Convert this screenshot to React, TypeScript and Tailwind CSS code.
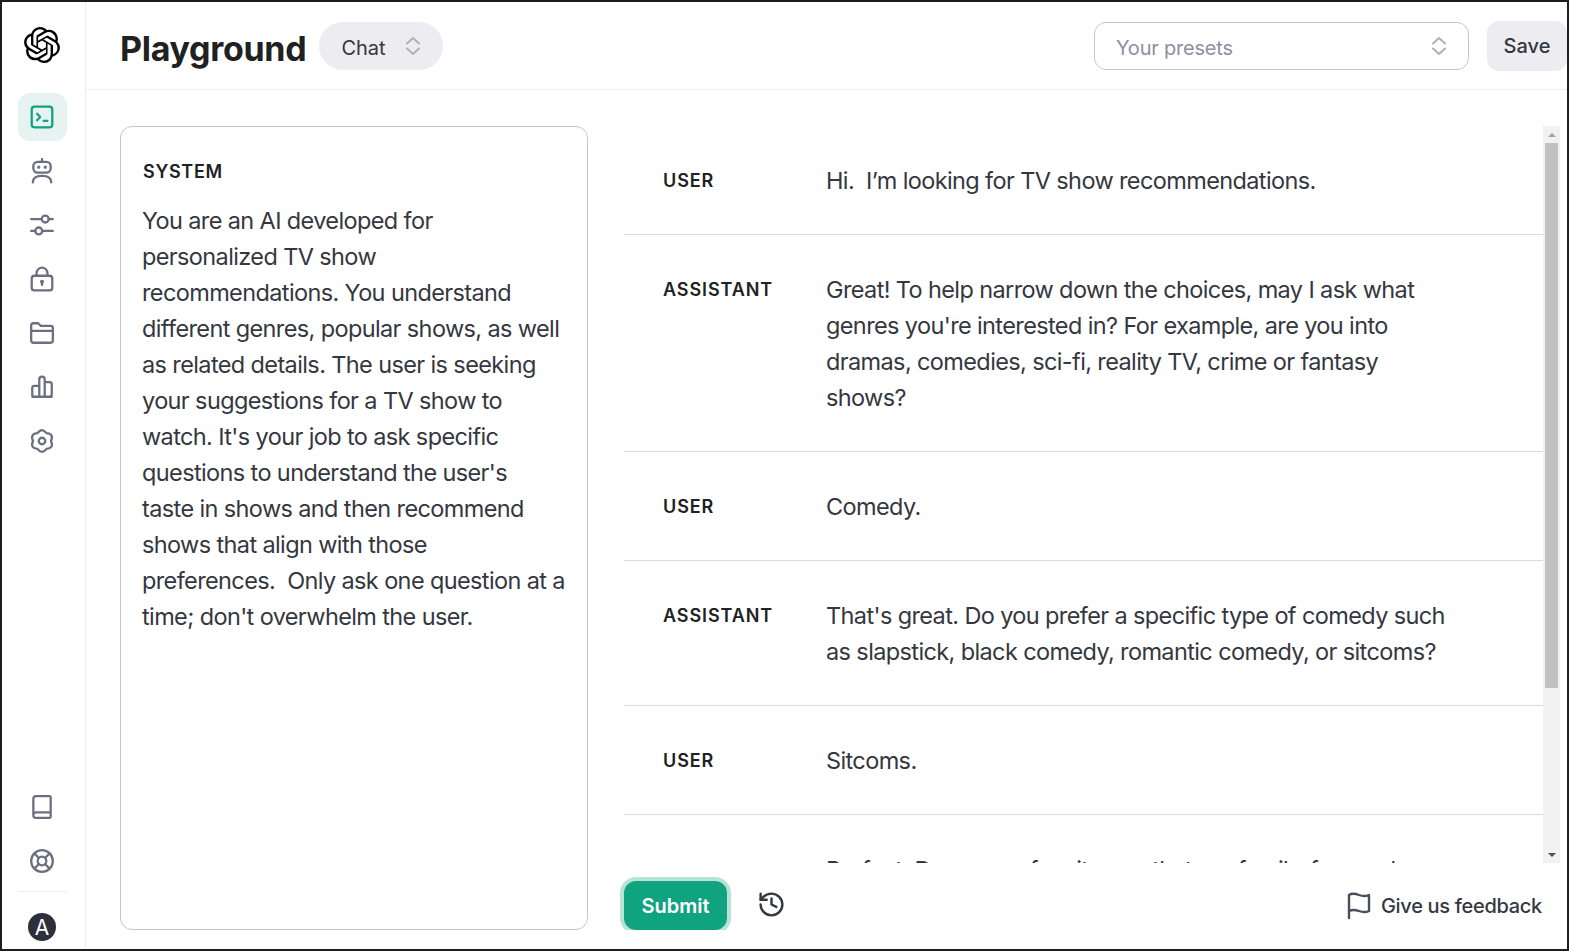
import { Book, History, LifeBuoy } from "lucide-react";
import { SiOpenai } from "react-icons/si";

const messages = [
  { role: "USER", lines: ["Hi.  I’m looking for TV show recommendations."] },
  {
    role: "ASSISTANT",
    lines: [
      "Great! To help narrow down the choices, may I ask what",
      "genres you're interested in? For example, are you into",
      "dramas, comedies, sci-fi, reality TV, crime or fantasy",
      "shows?",
    ],
  },
  { role: "USER", lines: ["Comedy."] },
  {
    role: "ASSISTANT",
    lines: [
      "That's great. Do you prefer a specific type of comedy such",
      "as slapstick, black comedy, romantic comedy, or sitcoms?",
    ],
  },
  { role: "USER", lines: ["Sitcoms."] },
  { role: "ASSISTANT", lines: ["Perfect. Do you prefer sitcoms that are family-focused"] },
];

const systemLines = [
  "You are an AI developed for",
  "personalized TV show",
  "recommendations. You understand",
  "different genres, popular shows, as well",
  "as related details. The user is seeking",
  "your suggestions for a TV show to",
  "watch. It's your job to ask specific",
  "questions to understand the user's",
  "taste in shows and then recommend",
  "shows that align with those",
  "preferences.  Only ask one question at a",
  "time; don't overwhelm the user.",
];

function Glyph({ children }: { children: React.ReactNode }) {
  return (
    <svg width="26" height="26" viewBox="0 0 24 24" fill="none" stroke="currentColor" strokeWidth="2.1" strokeLinecap="round" strokeLinejoin="round">
      {children}
    </svg>
  );
}

function UpDown({ className }: { className?: string }) {
  return (
    <svg width="16" height="20" viewBox="0 0 16 20" fill="none" stroke="#b0b0b8" strokeWidth="2" strokeLinecap="round" strokeLinejoin="round" className={className}>
      <path d="M2 7.500L8 2l6 5.500M2 12.500L8 18l6-5.500" />
    </svg>
  );
}

function NavItem({ active, children }: { active?: boolean; children: React.ReactNode }) {
  return (
    <div className={active ? "flex h-12 items-center justify-center rounded-xl bg-[#e6f3f1] text-[#10a37f]" : "flex h-12 items-center justify-center rounded-xl text-[#6e6e80]"}>
      {children}
    </div>
  );
}

export default function App() {
  return (
    <div className="flex h-screen overflow-hidden border-2 border-[#1e1e1e] bg-white font-['Inter',sans-serif] text-[#353740]">
      <aside className="flex w-[84px] shrink-0 flex-col border-r border-[#ececf1] pl-4 pr-[18px]">
        <div className="flex h-[91px] shrink-0 items-center justify-center pb-[5px] pr-[2px] text-black">
          <SiOpenai size={36} />
        </div>
        <nav className="flex flex-col gap-[6px] [&_svg]:-translate-x-[1px]">
          <NavItem active>
            <Glyph>
              <rect x="2.500" y="2.500" width="19" height="19" rx="2.500" />
              <path d="M7.500 9l2.800 3-2.800 3M13.500 15.500h3.500" />
            </Glyph>
          </NavItem>
          <NavItem>
            <Glyph>
              <path d="M12 1v2.500M3.500 22.500c0-4 3.500-6 8.500-6s8.500 2 8.500 6" />
              <rect x="4" y="3.500" width="16" height="10" rx="4" />
              <circle cx="9" cy="8.500" r="1" fill="currentColor" strokeWidth="1" />
              <circle cx="15" cy="8.500" r="1" fill="currentColor" strokeWidth="1" />
            </Glyph>
          </NavItem>
          <NavItem>
            <Glyph>
              <circle cx="15" cy="6.500" r="3.200" />
              <circle cx="9" cy="17.500" r="3.200" />
              <path d="M2 6.500h9.800M18.200 6.500H22M2 17.500h3.800M12.200 17.500H22" />
            </Glyph>
          </NavItem>
          <NavItem>
            <Glyph>
              <rect x="2.500" y="9" width="19" height="13.500" rx="2.500" />
              <path d="M7 9V6.500a5 5 0 0 1 10 0V9M12 15v2.500" />
              <circle cx="12" cy="14.500" r=".8" />
            </Glyph>
          </NavItem>
          <NavItem>
            <Glyph>
              <path d="M2 5a2 2 0 0 1 2-2h4.500l2.500 2.500h9a2 2 0 0 1 2 2V19a2 2 0 0 1-2 2H4a2 2 0 0 1-2-2zM2 10h20" />
            </Glyph>
          </NavItem>
          <NavItem>
            <Glyph>
              <path d="M9.500 21V5a2.500 2.500 0 0 1 5 0v16M9.500 21H5a2 2 0 0 1-2-2v-6a2 2 0 0 1 2-2h4.500M14.500 21H19a2 2 0 0 0 2-2V9.500a2 2 0 0 0-2-2h-4.500M3 21h18" />
            </Glyph>
          </NavItem>
          <NavItem>
            <Glyph>
              <path d="M7.850 4.800Q12-1 16.150 4.800 23.260 5.500 20.300 12 23.260 18.500 16.150 19.200 12 25 7.850 19.200 .74 18.500 3.700 12 .74 5.500 7.850 4.800z" />
              <circle cx="12" cy="12" r="3" />
            </Glyph>
          </NavItem>
        </nav>
        <div className="mt-auto flex flex-col gap-[6px] text-[#6e6e80] [&_svg]:-translate-x-[1px]">
          <div className="flex h-12 items-center justify-center">
            <Book size={26} strokeWidth={2.1} />
          </div>
          <div className="flex h-12 items-center justify-center">
            <LifeBuoy size={26} strokeWidth={2.1} />
          </div>
        </div>
        <div className="mt-[6px] flex h-[58px] shrink-0 items-start justify-center border-t border-[#ececf1] pr-[1px] pt-[21px]">
          <div className="flex h-[28px] w-[28px] items-center justify-center rounded-full bg-[#2d2f3a] text-[21px] leading-none text-white">A</div>
        </div>
      </aside>

      <main className="flex min-w-0 flex-1 flex-col">
        <header className="flex h-[88px] shrink-0 items-center border-b border-[#ececf1] pl-[34px]">
          <h1 className="pt-[5px] text-[34px] font-bold tracking-[-0.3px] text-[#202123]">Playground</h1>
          <div className="ml-[13px] flex h-12 w-[124px] items-center rounded-full bg-[#ececf1] pl-[22px] text-[20px]">
            <span className="pt-[4px]">Chat</span>
            <UpDown className="ml-[19px]" />
          </div>
          <div className="ml-auto flex h-12 w-[375px] items-center justify-between rounded-xl border border-[#c5c5d2] pl-[21px] pr-[21px] text-[20px] tracking-[-0.2px] text-[#8e8ea0]">
            <span className="pt-[4px]">Your presets</span>
            <UpDown />
          </div>
          <button className="ml-[18px] h-[50px] w-[80px] rounded-xl bg-[#ececf1] text-[20px] font-medium">Save</button>
        </header>

        <div className="mb-[19px] flex min-h-0 w-full flex-1 overflow-hidden pl-[34px] pr-[7px] pt-[36px]">
          <section className="h-[804px] w-[468px] shrink-0 rounded-xl border border-[#c5c5d2] pl-[21px] pt-[33px]">
            <div className="pl-[1px] text-[18px] font-semibold leading-6 tracking-[0.7px] text-[#202123]">SYSTEM</div>
            <div className="mt-[19px] text-[23.5px] leading-9 tracking-[-0.62px]">
              {systemLines.map((line) => (
                <div key={line} className="whitespace-pre">{line}</div>
              ))}
            </div>
          </section>

          <div className="ml-[36px] flex min-w-0 flex-1 flex-col">
            <div className="flex h-[737px] shrink-0">
              <div className="min-w-0 flex-1 overflow-hidden">
                {messages.map((m, i) => (
                  <div key={i} className="flex border-b border-[#d9d9e3] pb-[35px] pl-[39px] pt-[37px]">
                    <div className={i === messages.length - 1 ? "w-[163px] shrink-0 pt-[4px] text-[18px] font-semibold leading-9 tracking-[0.9px] text-[#202123]" : "w-[163px] shrink-0 text-[18px] font-semibold leading-9 tracking-[0.9px] text-[#202123]"}>{m.role}</div>
                    <div className="text-[23.5px] leading-9 tracking-[-0.62px]">
                      {m.lines.map((line) => (
                        <div key={line} className="whitespace-pre">{line}</div>
                      ))}
                    </div>
                  </div>
                ))}
              </div>
              <div className="flex w-[17px] shrink-0 flex-col items-center bg-[#f1f1f1]">
                <div className="flex h-[17px] shrink-0 items-center justify-center">
                  <div className="h-0 w-0 border-x-[4px] border-b-[4px] border-x-transparent border-b-[#a3a3a3]" />
                </div>
                <div className="h-[545px] w-[13px] bg-[#c1c1c1]" />
                <div className="mt-auto flex h-[17px] shrink-0 items-center justify-center">
                  <div className="h-0 w-0 border-x-[4px] border-t-[4px] border-x-transparent border-t-[#505050]" />
                </div>
              </div>
            </div>
            <div className="flex flex-1 items-start pt-[18px]">
              <button className="h-[49px] w-[103px] shrink-0 rounded-xl bg-[#10a37f] text-[20px] font-semibold text-white ring-4 ring-[#b8e4d8]">Submit</button>
              <History size={29} strokeWidth={2} className="ml-[30px] mt-[9px]" />
              <div className="ml-auto mr-[18px] mt-[10px] flex items-center gap-[9px] text-[20px] font-medium tracking-[-0.3px]">
                <svg width="26" height="28" viewBox="0 0 26 28" fill="none" stroke="#4b4d58" strokeWidth="2.400" strokeLinecap="round" strokeLinejoin="round">
                  <path d="M3 26V3c3-2 6-1.500 10 0s7 1.500 10 0v16c-3 1.500-6 1.500-10 0s-7-1.500-10 0" />
                </svg>
                <span>Give us feedback</span>
              </div>
            </div>
          </div>
        </div>
      </main>
    </div>
  );
}
